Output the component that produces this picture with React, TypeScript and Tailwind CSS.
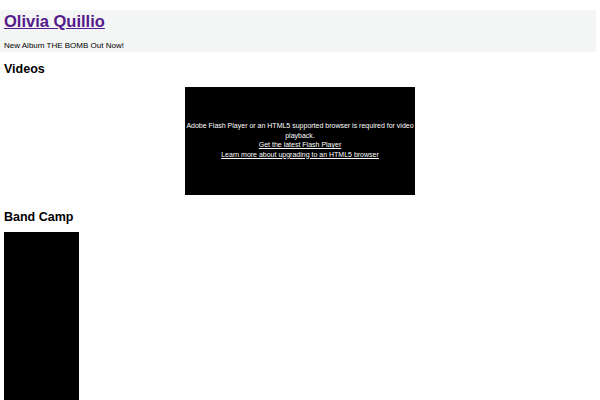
export default function App() {
  return (
    <div className="w-[600px] h-[400px] overflow-hidden bg-white font-['Liberation_Sans',Arial,sans-serif] text-black">
      <div className="mt-[10px] w-[596px] h-[42px] bg-[#f4f5f5] px-[4px] pt-[1px]">
        <h1 className="text-[16.5px] leading-[20px] font-bold">
          <a href="#" className="text-[#551a8b] underline">Olivia Quillio</a>
        </h1>
        <p className="mt-[10px] text-[8px] leading-[10px]">New Album THE BOMB Out Now!</p>
      </div>
      <h2 className="mt-[10px] px-[4px] text-[12.5px] leading-[15px] font-bold">Videos</h2>
      <div className="mt-[10px] mx-auto w-[230px] h-[108px] bg-black flex flex-col items-center justify-center text-white text-[7px] leading-[9.5px] text-center pb-[2px]">
        <p className="whitespace-nowrap">Adobe Flash Player or an HTML5 supported browser is required for video</p>
        <p>playback.</p>
        <a href="#" className="underline">Get the latest Flash Player </a>
        <a href="#" className="underline">Learn more about upgrading to an HTML5 browser</a>
      </div>
      <h2 className="mt-[15px] px-[4px] text-[12.5px] leading-[15px] font-bold">Band Camp</h2>
      <div className="mt-[7px] ml-[4px] w-[75px] h-[400px] bg-black" />
    </div>
  );
}
